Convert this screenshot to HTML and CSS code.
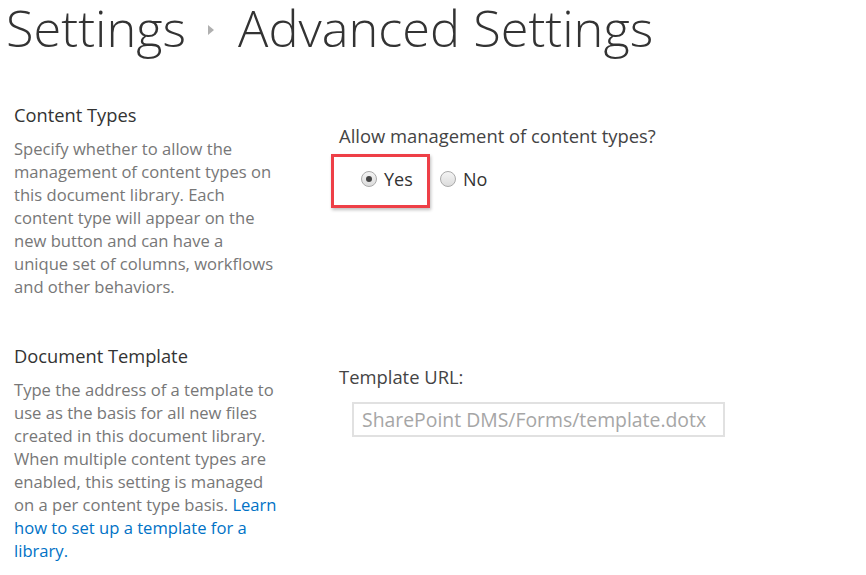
FILE: index.html
```html
<!DOCTYPE html>
<html>
<head>
<meta charset="utf-8">
<link rel="stylesheet" href="styles.css">
</head>
<body>
<h1 class="title"><span>Settings</span><span class="crumb"></span><span>Advanced Settings</span></h1>
<div class="section s1">
  <div class="left">
    <h3 class="head">Content Types</h3>
    <p class="desc">Specify whether to allow the<br>management of content types on<br>this document library. Each<br>content type will appear on the<br>new button and can have a<br>unique set of columns, workflows<br>and other behaviors.</p>
  </div>
  <div class="right">
    <div class="label">Allow management of content types?</div>
    <div class="radios">
      <div class="highlight">
        <label class="opt"><span class="radio checked"></span>Yes</label>
      </div>
      <label class="opt no"><span class="radio"></span>No</label>
    </div>
  </div>
</div>
<div class="section s2">
  <div class="left">
    <h3 class="head">Document Template</h3>
    <p class="desc">Type the address of a template to<br>use as the basis for all new files<br>created in this document library.<br>When multiple content types are<br>enabled, this setting is managed<br>on a per content type basis. <a href="#" class="link">Learn<br>how to set up a template for a<br>library.</a></p>
  </div>
  <div class="right">
    <div class="label">Template URL:</div>
    <div class="input">SharePoint DMS/Forms/template.dotx</div>
  </div>
</div>
</body>
</html>
```
FILE: styles.css
```css
html, body { margin: 0; padding: 0; background: #fff; }
body { font-family: "Open Sans", "Noto Sans", sans-serif; color: #444; width: 866px; height: 575px; overflow: hidden; }
.title { margin: 0; padding: 0 0 0 6px; font-weight: 300; font-size: 50.5px; line-height: 56px; color: #333; display: flex; align-items: center; white-space: nowrap; }
.crumb { width: 0; height: 0; border-top: 5px solid transparent; border-bottom: 5px solid transparent; border-left: 6px solid #b0b0b0; margin: 4px 24px 0 22px; }
.section { display: grid; grid-template-columns: 325px 1fr; }
.s1 { margin-top: 47px; }
.s2 { margin-top: 46px; }
.left { padding-left: 14px; }
.head { margin: 0; font-weight: 400; font-size: 18.3px; line-height: 24px; color: #333; }
.desc { margin: 10px 0 0; font-size: 16.6px; line-height: 23px; color: #777; width: 310px; white-space: nowrap; }
.link { color: #0072c6; text-decoration: none; }
.right { padding-left: 14px; padding-top: 22px; }
.label { font-size: 18.4px; line-height: 22px; color: #444; }
.radios { display: flex; align-items: center; margin-top: 7px; margin-left: -8px; }
.highlight { height: 43px; padding-bottom: 5px; border: 3px solid #ee3f47; box-shadow: 1px 2px 3px rgba(0,0,0,0.25); display: flex; align-items: center; padding-left: 27px; box-sizing: content-box; width: 66px; margin-right: 10px; }
.opt { display: flex; align-items: center; font-size: 18px; color: #333; }
.no { margin-bottom: 5px; }
.radio { width: 14px; height: 14px; border-radius: 50%; border: 1px solid #aaa; background: linear-gradient(#f4f4f4, #dcdcdc); margin-right: 7px; display: inline-flex; align-items: center; justify-content: center; }
.radio.checked::after { content: ""; width: 6px; height: 6px; border-radius: 50%; background: #444; }
.input { margin-top: 14px; margin-left: 13px; height: 31px; border: 2px solid #e1e1e1; font-size: 19.4px; line-height: 31px; color: #a6a6a6; padding-left: 8px; box-sizing: content-box; width: 361px; white-space: nowrap; }
```
